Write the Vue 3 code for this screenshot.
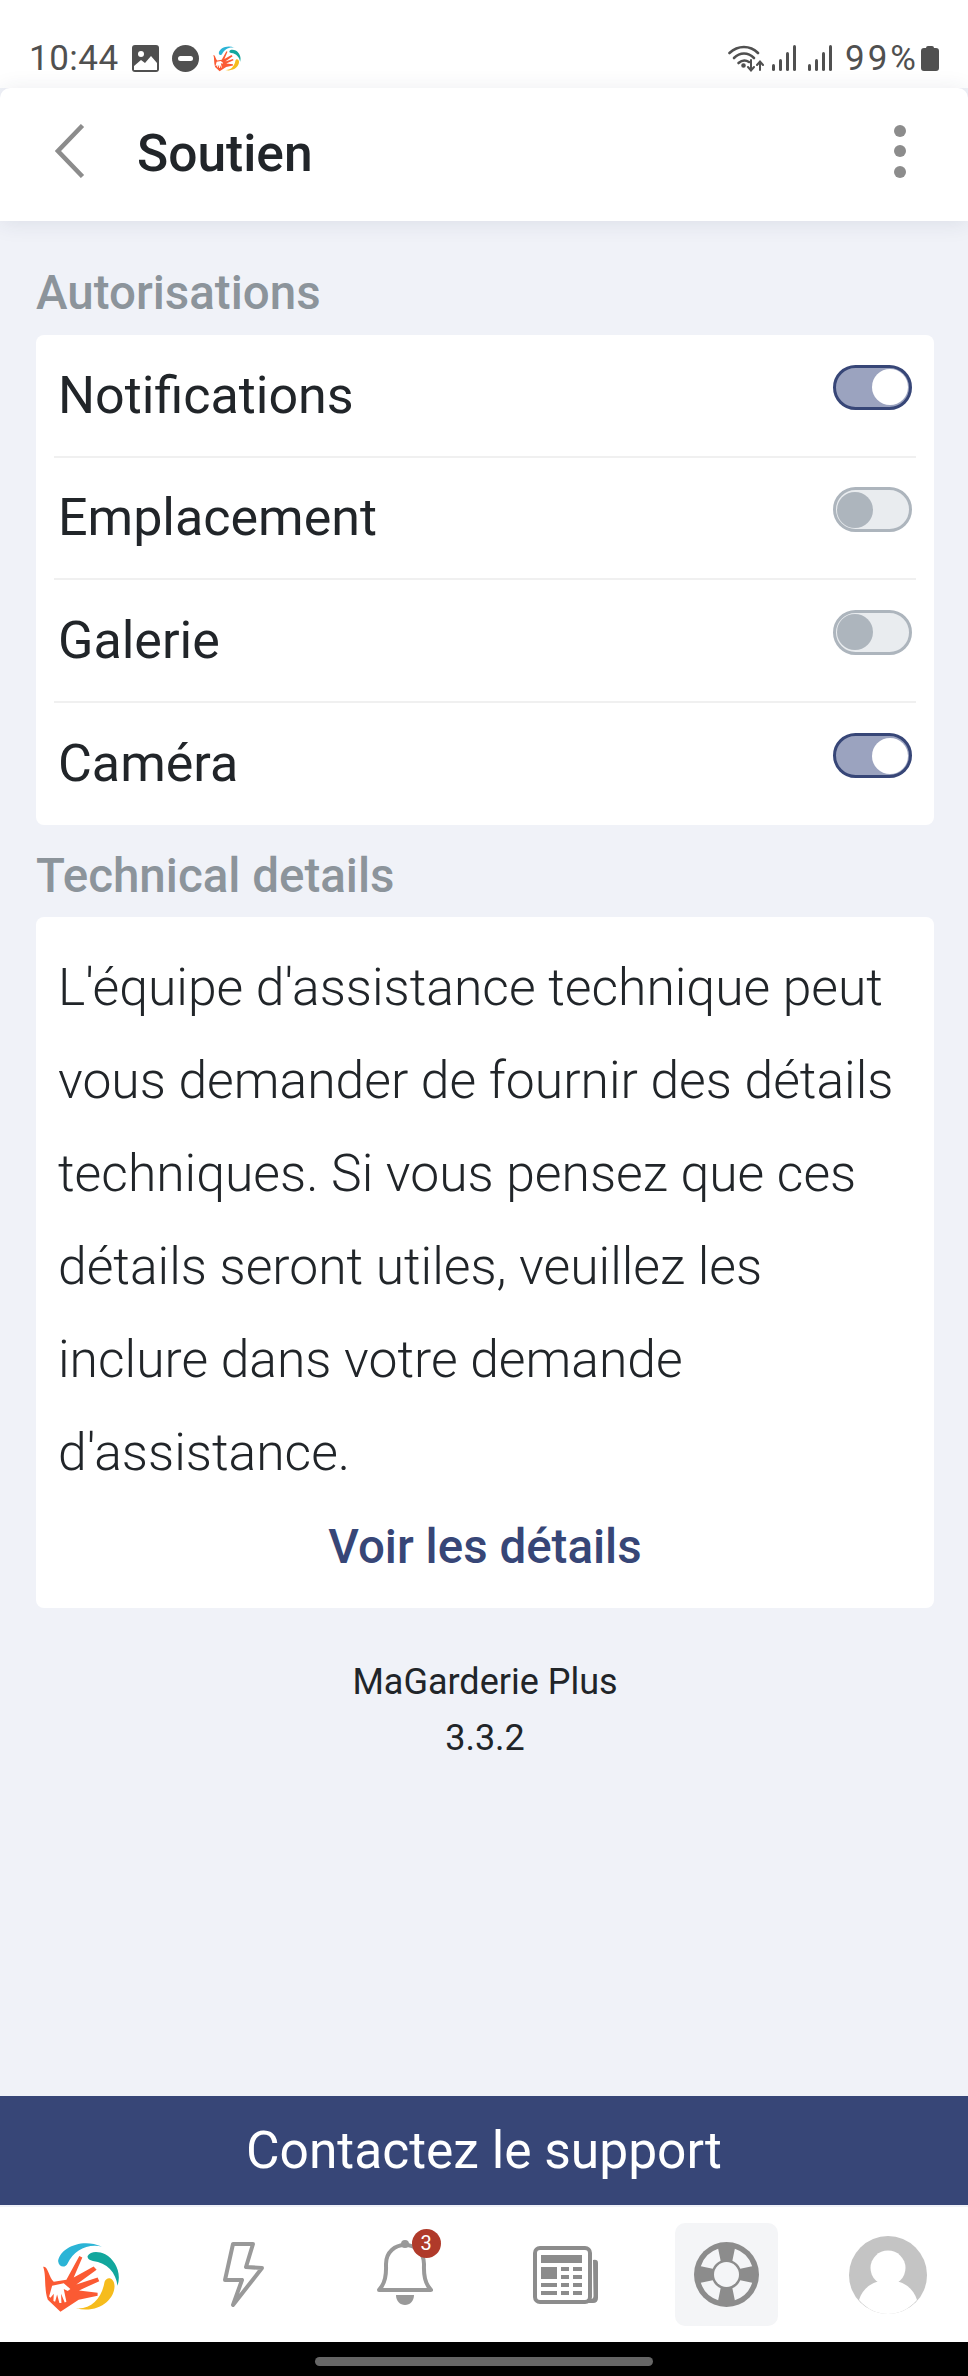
<template>
  <div class="screen">
    <!-- barre d'état -->
    <div class="status-bar">
      <div class="status-left">
        <span class="clock">10:44</span>
        <svg class="st-icon" width="27" height="27" viewBox="0 0 27 27">
          <rect width="27" height="27" rx="3" fill="#505050" />
          <circle cx="9" cy="9" r="3" fill="#fff" />
          <path d="M2 25 L2 21 L9 15 L13 18 L19 11 L25 18 L25 25 Z" fill="#fff" />
        </svg>
        <svg class="st-icon" width="27" height="27" viewBox="0 0 27 27">
          <circle cx="13.5" cy="13.5" r="13.5" fill="#505050" />
          <rect x="6" y="11" width="15" height="5" rx="2.5" fill="#fff" />
        </svg>
        <svg class="st-icon" width="30" height="28" viewBox="92 40 240 235">
          <path v-for="p in logoParts" :key="p.d" :d="p.d" :fill="p.fill" />
        </svg>
      </div>
      <div class="status-right">
        <svg width="37" height="28" viewBox="0 0 37 28" fill="none" stroke="#505050" stroke-width="2.6" stroke-linecap="round">
          <path d="M1.5 9 C10 1 22 1 30 9" />
          <path d="M6 14 C12 8 20 8 26 14" />
          <path d="M10.5 19 C14 16 18 16 21 18" />
          <circle cx="15.5" cy="21.5" r="1" fill="#505050" />
          <path d="M23 16 V26 M20 23 L23 26.5 L26 23" stroke-width="2" />
          <path d="M32 26 V18 M29 21 L32 17.5 L35 21" stroke-width="2" />
        </svg>
        <svg v-for="n in 2" :key="n" class="signal" width="24" height="26" viewBox="0 0 24 26" fill="#505050">
          <rect x="0" y="19" width="3" height="7" rx="1.5" />
          <rect x="7" y="14" width="3" height="12" rx="1.5" />
          <rect x="14" y="7" width="3" height="19" rx="1.5" />
          <rect x="21" y="0" width="3" height="26" rx="1.5" />
        </svg>
        <span class="percent">99%</span>
        <svg width="18" height="25" viewBox="0 0 18 25" fill="#505050">
          <path d="M5 2 Q5 0 7 0 H11 Q13 0 13 2 H15 Q18 2 18 5 V22 Q18 25 15 25 H3 Q0 25 0 22 V5 Q0 2 3 2 Z" />
        </svg>
      </div>
    </div>

    <!-- en-tête -->
    <header class="top-bar">
      <svg class="back" width="30" height="54" viewBox="0 0 30 54" fill="none" stroke="#8c8c8c" stroke-width="4.5">
        <path d="M27.5 1.5 L3 27 L27.5 52.5" />
      </svg>
      <h1 class="title">Soutien</h1>
      <div class="dots"><i></i><i></i><i></i></div>
    </header>

    <main class="content">
      <h2 class="section-label first">Autorisations</h2>
      <div class="card perms">
        <div class="perm-row" v-for="perm in permissions" :key="perm.name">
          <span class="perm-name">{{ perm.name }}</span>
          <span :class="['switch', { on: perm.on }]"><b></b></span>
        </div>
      </div>

      <h2 class="section-label">Technical details</h2>
      <div class="card details">
        <p class="details-text">L'équipe d'assistance technique peut vous demander de fournir des détails techniques. Si vous pensez que ces détails seront utiles, veuillez les inclure dans votre demande d'assistance.</p>
        <div class="details-link">Voir les détails</div>
      </div>

      <div class="version">
        <div>MaGarderie Plus</div>
        <div>3.3.2</div>
      </div>
    </main>

    <button class="support-btn">Contactez le support</button>

    <!-- barre d'onglets -->
    <nav class="tabs">
      <div class="tab">
        <svg class="tab-logo" width="80" height="78" viewBox="92 40 240 235">
          <path v-for="p in logoParts" :key="p.d" :d="p.d" :fill="p.fill" />
        </svg>
      </div>
      <div class="tab">
        <svg width="44" height="68" viewBox="221 2238 44 68" fill="none" stroke="#999" stroke-width="4" stroke-linejoin="round">
          <path d="M232 2241 L252 2241 L245 2264 L261 2265 L232 2302 L241 2277 L224 2277 Z" />
        </svg>
      </div>
      <div class="tab">
        <span class="bell">
          <svg width="56" height="66" viewBox="0 0 56 66">
            <path d="M5 46 C10 38 9 30 9 24 C9 12 18 5 28 5 C38 5 47 12 47 24 C47 30 46 38 51 46 L54 50 H2 Z" fill="none" stroke="#999" stroke-width="4" stroke-linejoin="round" />
            <circle cx="28" cy="4" r="4" fill="#999" />
            <path d="M19 55 H37 C37 61 33 65 28 65 C23 65 19 61 19 55 Z" fill="#999" />
          </svg>
          <span class="badge">3</span>
        </span>
      </div>
      <div class="tab">
        <svg width="66" height="58" viewBox="0 0 66 58">
          <rect x="2" y="2" width="55" height="54" rx="5" fill="none" stroke="#8c8c8c" stroke-width="4" />
          <path d="M60 14 Q65 13 65 17 V52 Q65 57 60 57 H54 V53 H58 Q60.500 53 60.500 50 Z" fill="#8c8c8c" />
          <g fill="#8c8c8c">
            <rect x="8" y="9" width="41" height="8" />
            <rect x="8" y="21" width="16" height="12" />
            <rect x="28" y="21" width="8" height="4" />
            <rect x="40" y="21" width="9" height="4" />
            <rect x="28" y="29" width="8" height="4" />
            <rect x="40" y="29" width="9" height="4" />
            <rect x="8" y="37" width="16" height="4" />
            <rect x="28" y="37" width="8" height="4" />
            <rect x="40" y="37" width="9" height="4" />
            <rect x="8" y="45" width="16" height="4" />
            <rect x="28" y="45" width="8" height="4" />
            <rect x="40" y="45" width="9" height="4" />
          </g>
        </svg>
      </div>
      <div class="tab">
        <div class="tab-active">
          <svg width="65" height="65" viewBox="-32.500 -32.500 65 65">
            <circle r="32.500" fill="#8c8c8c" />
            <path
              v-for="a in [45, 135, 225, 315]"
              :key="a"
              d="M13.900 -5.600 L24.060 -12.260 A27 27 0 0 1 24.060 12.260 L13.900 5.600 A15 15 0 0 0 13.900 -5.600 Z"
              :transform="`rotate(${a})`"
              fill="#f4f5f7"
            />
            <circle r="12.500" fill="#f4f5f7" />
          </svg>
        </div>
      </div>
      <div class="tab">
        <svg class="avatar" width="78" height="78" viewBox="0 0 78 78">
          <circle cx="39" cy="39" r="39" fill="#c4c4c4" />
          <circle cx="39" cy="32" r="17.500" fill="#fff" />
          <path d="M10 64 C14 50 27 44 39 44 C51 44 64 50 68 64 C60 73 50 78 39 78 C28 78 18 73 10 64 Z" fill="#fff" />
        </svg>
      </div>
    </nav>

    <div class="home-area"><span class="home-bar"></span></div>
  </div>
</template>

<script setup>
const permissions = [
  { name: 'Notifications', on: true },
  { name: 'Emplacement', on: false },
  { name: 'Galerie', on: false },
  { name: 'Caméra', on: true }
]

// logo dessiné à la main, repris dans la barre d'état et les onglets
const logoParts = [
  { fill: '#2bb4d6', d: 'M143 115 C150 75 215 45 275 72 C230 62 190 85 172 122 C165 138 145 135 143 115 Z' },
  { fill: '#12a79d', d: 'M232 100 C240 85 265 85 285 95 C315 112 335 150 322 190 C318 150 290 120 248 115 C238 113 230 108 232 100 Z' },
  { fill: '#f6bc1c', d: 'M283 178 C290 160 312 165 313 190 C314 230 265 275 197 258 C245 262 275 225 283 178 Z' },
  { fill: '#fb5a33', d: 'M98 133 C112 128 115 165 130 178 L168 172 L207 100 L216 105 L190 165 L250 132 L259 142 L198 186 L262 165 L267 176 L206 204 L262 211 L262 220 L205 232 L150 268 L112 232 C100 200 108 160 98 133 Z' },
  { fill: '#fff', d: 'M125 190 L160 182 L180 200 L172 206 L160 200 L168 238 L163 240 L152 214 L153 242 L147 242 L140 216 L134 238 L129 236 L130 214 L120 226 L116 222 Z' }
]
</script>

<style>
html, body {
  margin: 0;
  background: #000;
}
</style>

<style scoped>
.screen {
  width: 968px;
  height: 2376px;
  display: flex;
  flex-direction: column;
  background: #f0f2f8;
  font-family: Roboto, "Liberation Sans", sans-serif;
  color: #212529;
  overflow: hidden;
}

/* barre d'état */
.status-bar {
  height: 88px;
  flex: none;
  box-sizing: border-box;
  padding: 0 29px;
  display: flex;
  justify-content: space-between;
  align-items: center;
  background: #fff;
  color: #505050;
  font-size: 35px;
}
.status-left,
.status-right {
  display: flex;
  align-items: center;
  margin-top: 28px;
}
.status-left .st-icon {
  margin-left: 13px;
}
.clock {
  letter-spacing: 0.5px;
}
.signal {
  margin-left: 7px;
}
.signal + .signal {
  margin-left: 12px;
}
.percent {
  margin: 0 2px 0 13px;
  letter-spacing: 3px;
}

/* en-tête */
.top-bar {
  height: 133px;
  flex: none;
  display: flex;
  align-items: center;
  background: #fff;
  border-radius: 10px 10px 0 0;
  box-shadow: 0 2px 22px rgba(40, 50, 80, 0.1);
  position: relative;
}
.back {
  margin: -8px 0 0 55px;
}
.title {
  margin: -2px 0 0 52px;
  font-size: 51.500px;
  font-weight: 500;
  flex: 1;
}
.dots {
  margin: -7px 62px 0 0;
  display: flex;
  flex-direction: column;
  gap: 8.500px;
}
.dots i {
  display: block;
  width: 12px;
  height: 12px;
  border-radius: 50%;
  background: #8c8c8c;
}

/* contenu */
.content {
  flex: 1;
  padding: 0 34px 0 36px;
}
.section-label {
  margin: 0;
  height: 92px;
  line-height: 102px;
  box-sizing: border-box;
  font-size: 47.500px;
  font-weight: 500;
  color: #8c949b;
}
.section-label.first {
  height: 114px;
  line-height: 144px;
}
.card {
  background: #fff;
  border-radius: 8px;
}
.perms {
  padding: 0 18px;
}
.perm-row {
  height: 122.500px;
  box-sizing: border-box;
  display: flex;
  align-items: center;
  justify-content: space-between;
  border-bottom: 2px solid #f0f0f0;
}
.perm-row:last-child {
  border-bottom: none;
}
.perm-name {
  font-size: 52px;
  margin-left: 4px;
}
.switch {
  width: 79px;
  height: 45px;
  box-sizing: border-box;
  border: 3px solid #adb5bd;
  border-radius: 23px;
  background: #e9ecef;
  display: flex;
  align-items: center;
  padding: 0 1px;
  margin: 0 4px 16px 0;
}
.switch b {
  width: 36px;
  height: 36px;
  border-radius: 50%;
  background: #adb5bd;
}
.switch.on {
  border-color: #374677;
  background: #9ba3bf;
  justify-content: flex-end;
}
.switch.on b {
  background: #fff;
}

.details {
  padding: 0 22px;
  height: 691px;
  box-sizing: border-box;
}
.details-text {
  margin: 0;
  padding-top: 24px;
  font-size: 51.600px;
  font-weight: 300;
  line-height: 93px;
}
.details-link {
  margin-top: 20px;
  text-align: center;
  font-size: 47.500px;
  font-weight: 500;
  color: #374677;
}
.version {
  margin-top: 46px;
  text-align: center;
  font-size: 36px;
  line-height: 56px;
}

/* bouton */
.support-btn {
  flex: none;
  height: 109px;
  border: 0;
  padding: 0;
  background: #374677;
  color: #fff;
  font-family: inherit;
  font-size: 51.500px;
  margin-bottom: 2px;
}

/* onglets */
.tabs {
  flex: none;
  height: 135px;
  padding-left: 2px;
  background: #fff;
  display: grid;
  grid-template-columns: repeat(6, 1fr);
}
.tab {
  display: flex;
  align-items: center;
  justify-content: center;
}
.tab-logo {
  margin-left: -3px;
}
.tab-active {
  width: 103px;
  height: 103px;
  border-radius: 10px;
  background: #f4f5f7;
  display: flex;
  align-items: center;
  justify-content: center;
  margin-top: -1px;
}
.bell {
  position: relative;
  display: flex;
  margin-top: -3px;
}
.badge {
  position: absolute;
  top: -11px;
  right: -8px;
  width: 29px;
  height: 29px;
  border-radius: 50%;
  background: #b03a2a;
  color: #fff;
  font-size: 20px;
  line-height: 29px;
  text-align: center;
}
.avatar {
  margin-top: 1px;
}

.home-area {
  flex: none;
  height: 34px;
  background: #000;
  display: flex;
  align-items: center;
  justify-content: center;
}
.home-bar {
  width: 338px;
  height: 9px;
  border-radius: 5px;
  background: #666;
  margin-top: 5px;
}
</style>
